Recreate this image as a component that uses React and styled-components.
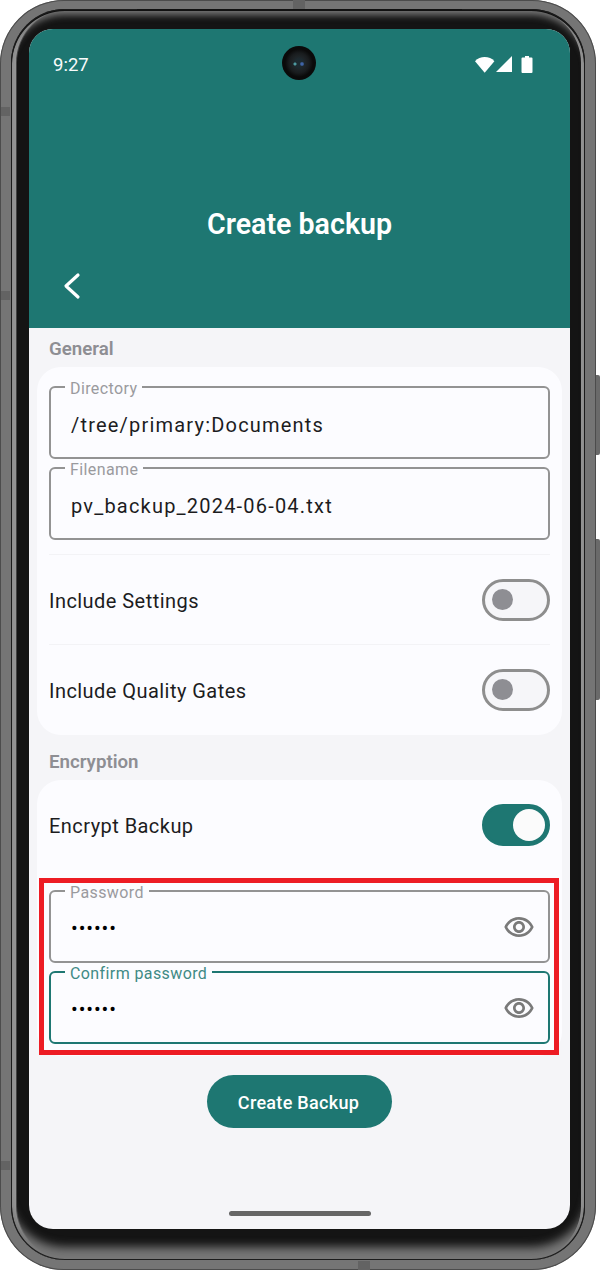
import React from "react";
import styled, { createGlobalStyle } from "styled-components";

const teal = "#1e7772";

const GlobalStyle = createGlobalStyle`
	* {
		box-sizing: border-box;
	}
	html, body {
		margin: 0;
		background: #fff;
	}
	body {
		font-family: Roboto, "Liberation Sans", sans-serif;
	}
`;

const Shell = styled.div`
	position: relative;
	display: flex;
	width: 596px;
	height: 1270px;
	padding: 9px 11px 10px;
	border-radius: 64px;
	background: #757575;
	box-shadow: inset 0 0 0 1px #4c4c4c;
`;

const SideKey = styled.div`
	position: absolute;
	left: 100%;
	top: ${(p) => p.$top}px;
	width: 4px;
	height: ${(p) => p.$height}px;
	background: #6a6a6a;
	border-radius: 0 2px 2px 0;
`;

const Band = styled.div`
	position: absolute;
	top: ${(p) => p.$top}px;
	left: ${(p) => p.$left}px;
	width: ${(p) => p.$width}px;
	height: ${(p) => p.$height}px;
	background: ${(p) => p.$color || "#636363"};
`;

const Bezel = styled.div`
	display: flex;
	flex: 1;
	padding: 20px 15px 31px 18px;
	border-radius: 54px;
	background: #141414;
	box-shadow: inset 0 0 0 1px #1c1c1c, inset 0 1px 0 1px #111,
		inset 0 9px 7px -3px #777, inset 0 -17px 10px -4px #777,
		inset 5px 0 0 #979797, inset 6px 0 0 #444, inset -4px 0 0 #979797;
`;

const Screen = styled.div`
	display: flex;
	flex: 1;
	flex-direction: column;
	overflow: hidden;
	border-radius: 24px;
	background: #f5f5f8;
`;

const Header = styled.header`
	display: flex;
	flex-direction: column;
	height: 299px;
	background: ${teal};
	color: #fff;
`;

const StatusBar = styled.div`
	position: relative;
	display: flex;
	align-items: center;
	justify-content: space-between;
	height: 22px;
	margin-top: 24px;
	padding: 0 37px 0 24px;
`;

const Clock = styled.span`
	padding-top: 2px;
	font-size: 18.5px;
	color: #f8fbfb;
`;

const StatusIcons = styled.div`
	display: flex;
	align-items: center;
`;

const Camera = styled.div`
	position: absolute;
	left: 253px;
	top: -7px;
	width: 34px;
	height: 34px;
	border-radius: 50%;
	background: radial-gradient(circle at 13px 18px, #4e9aa0 0 1px, transparent 2px),
		radial-gradient(circle at 20px 18px, #3f64a8 0 1.2px, transparent 2.4px),
		radial-gradient(circle at 50% 50%, #1d2a30 0 4px, #1e2326 7px, #191c1e 10px, #0a0a0a 14px);
`;

const Title = styled.h1`
	margin: 131px 0 0;
	font-size: 28.6px;
	font-weight: 600;
	line-height: 36px;
	text-align: center;
`;

const BackIcon = styled.svg`
	display: block;
	margin: 30px 0 0 33px;
	width: 20px;
	height: 28px;
`;

const GroupTitle = styled.h2`
	display: flex;
	align-items: center;
	height: ${(p) => p.$height}px;
	margin: 0;
	padding: ${(p) => p.$pad}px 0 0 20px;
	font-size: 18.7px;
	font-weight: 600;
	color: #8e8e93;
`;

const Card = styled.section`
	margin: 0 8px;
	padding: ${(p) => p.$pad};
	border-radius: 24px;
	background: #fcfcff;
`;

const Field = styled.fieldset`
	display: flex;
	align-items: center;
	justify-content: space-between;
	height: 83px;
	margin: 0;
	padding: 0 13px 6px 20px;
	border: 2px solid ${(p) => (p.$focused ? teal : "#939393")};
	border-radius: 6px;

	& + & {
		margin-top: -2px;
	}
`;

const FieldLabel = styled.legend`
	margin-left: -6px;
	padding: 4px 5px 0;
	font-size: 16px;
	line-height: 18px;
	letter-spacing: 0.4px;
	color: ${(p) => (p.$focused ? "#3f8a85" : "#9a9a9e")};
`;

const FieldValue = styled.span`
	font-size: 20px;
	letter-spacing: 1.2px;
	color: #1c1c1e;
`;

const Dots = styled.span`
	margin-bottom: 2px;
	font-size: 20px;
	letter-spacing: 0.9px;
	color: #000;
`;

const EyeIcon = styled.svg`
	width: 32px;
	height: 32px;
	margin-bottom: 4px;
	fill: #7a7a7a;
`;

const Row = styled.div`
	display: flex;
	align-items: center;
	justify-content: space-between;
	height: ${(p) => p.$height || 90}px;
	margin-top: ${(p) => p.$gap || 0}px;
	border-top: ${(p) => (p.$divided ? "1px solid #f3f3f6" : "none")};
`;

const RowLabel = styled.span`
	padding-top: 2px;
	font-size: 20px;
	letter-spacing: 0.45px;
	color: #1c1c1e;
`;

const Toggle = styled.div`
	display: flex;
	align-items: center;
	justify-content: ${(p) => (p.$on ? "flex-end" : "flex-start")};
	width: 68px;
	height: 42px;
	padding: ${(p) => (p.$on ? "0 2px" : "0 7px")};
	border: 3px solid ${(p) => (p.$on ? teal : "#8e8e8e")};
	border-radius: 21px;
	background: ${(p) => (p.$on ? teal : "#f6f6f9")};
`;

const Thumb = styled.div`
	width: ${(p) => (p.$on ? 32 : 21)}px;
	height: ${(p) => (p.$on ? 32 : 21)}px;
	border-radius: 50%;
	background: ${(p) => (p.$on ? "#fbfbfb" : "#8e8e93")};
`;

const Highlighted = styled.div`
	position: relative;
	margin-top: 11px;

	&::after {
		content: "";
		position: absolute;
		inset: -2px -9px -11px -10px;
		border: 5px solid #ed1c24;
		pointer-events: none;
	}
`;

const Footer = styled.div`
	display: flex;
	flex: 1;
	flex-direction: column;
	align-items: center;
	padding-top: 19px;
`;

const PrimaryButton = styled.button`
	width: 185px;
	height: 53px;
	padding: 2px 2px 0 0;
	border: none;
	border-radius: 27px;
	background: ${teal};
	color: #fff;
	font: 500 18px Roboto, sans-serif;
	letter-spacing: 0.3px;
`;

const HomeBar = styled.div`
	width: 142px;
	height: 5px;
	margin-top: auto;
	margin-bottom: 13px;
	border-radius: 3px;
	background: #666;
`;

const Eye = () => (
	<EyeIcon viewBox="0 0 24 24">
		<path d="M12 6.5c3.79 0 7.17 2.13 8.82 5.5-1.65 3.37-5.02 5.5-8.82 5.5S4.83 15.37 3.18 12C4.83 8.63 8.21 6.5 12 6.5m0-2C7 4.5 2.73 7.61 1 12c1.73 4.39 6 7.5 11 7.5s9.27-3.11 11-7.5c-1.73-4.39-6-7.5-11-7.5zm0 5c1.38 0 2.5 1.12 2.5 2.5s-1.12 2.5-2.5 2.5-2.5-1.12-2.5-2.5 1.12-2.5 2.5-2.5m0-2c-2.48 0-4.5 2.02-4.5 4.5s2.02 4.5 4.5 4.5 4.5-2.02 4.5-4.5-2.02-4.5-4.5-4.5z" />
	</EyeIcon>
);

const Switch = ({ on }) => (
	<Toggle $on={on}>
		<Thumb $on={on} />
	</Toggle>
);

const App = () => (
	<>
		<GlobalStyle />
		<Shell>
			<SideKey $top={375} $height={80} />
			<SideKey $top={539} $height={161} />
			<Band $top={0} $left={293} $width={12} $height={9} />
			<Band $top={1261} $left={358} $width={12} $height={9} />
			<Band $top={107} $left={1} $width={9} $height={9} />
			<Band $top={291} $left={1} $width={9} $height={9} />
			<Band $top={1161} $left={1} $width={9} $height={9} />
			<Band $top={9} $left={137} $width={325} $height={2} $color="#111" />
			<Bezel>
				<Screen>
					<Header>
						<StatusBar>
							<Clock>9:27</Clock>
							<Camera />
							<StatusIcons>
								<svg width="20" height="17" viewBox="0 0 20 17">
									<path d="M0 5.2C2.6 2.3 6 1 9.7 1s7.3 1.3 9.7 4.2L9.7 16.8z" fill="#fff" />
								</svg>
								<svg width="17" height="16" viewBox="0 0 17 16" style={{ marginLeft: 1 }}>
									<path d="M16 0v16H0z" fill="#fff" />
								</svg>
								<svg width="12" height="17" viewBox="0 0 12 17" style={{ marginLeft: 8 }}>
									<path d="M4 0h4v1.5h2.5A1 1 0 0 1 11.5 2.5V16a1 1 0 0 1-1 1h-9a1 1 0 0 1-1-1V2.5a1 1 0 0 1 1-1H4z" fill="#fff" />
								</svg>
							</StatusIcons>
						</StatusBar>
						<Title>Create backup</Title>
						<BackIcon viewBox="0 0 20 28" fill="none" stroke="#fff" strokeWidth="3.2" strokeLinecap="round" strokeLinejoin="round">
							<path d="M16 3 L4 14 L16 25" />
						</BackIcon>
					</Header>

					<GroupTitle $height={39} $pad={2}>General</GroupTitle>
					<Card $pad="9px 12px 1px">
						<Field>
							<FieldLabel>Directory</FieldLabel>
							<FieldValue>/tree/primary:Documents</FieldValue>
						</Field>
						<Field>
							<FieldLabel>Filename</FieldLabel>
							<FieldValue>pv_backup_2024-06-04.txt</FieldValue>
						</Field>
						<Row $divided $gap={14}>
							<RowLabel>Include Settings</RowLabel>
							<Switch />
						</Row>
						<Row $divided>
							<RowLabel>Include Quality Gates</RowLabel>
							<Switch />
						</Row>
					</Card>

					<GroupTitle $height={45} $pad={8}>Encryption</GroupTitle>
					<Card $pad="0 12px 12px">
						<Row $height={89}>
							<RowLabel>Encrypt Backup</RowLabel>
							<Switch on />
						</Row>
						<Highlighted>
							<Field>
								<FieldLabel>Password</FieldLabel>
								<Dots>••••••</Dots>
								<Eye />
							</Field>
							<Field $focused>
								<FieldLabel $focused>Confirm password</FieldLabel>
								<Dots>••••••</Dots>
								<Eye />
							</Field>
						</Highlighted>
					</Card>

					<Footer>
						<PrimaryButton>Create Backup</PrimaryButton>
						<HomeBar />
					</Footer>
				</Screen>
			</Bezel>
		</Shell>
	</>
);

export default App;
